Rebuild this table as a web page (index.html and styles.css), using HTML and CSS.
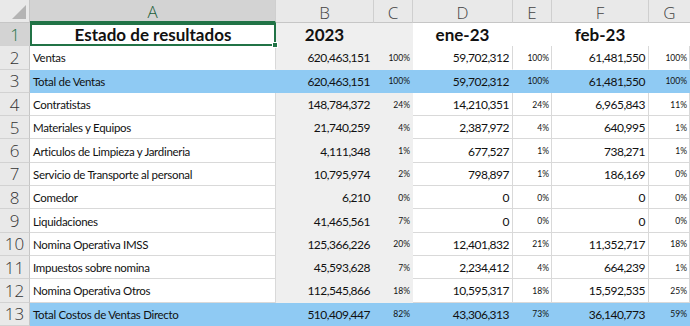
FILE: index.html
```html
<!DOCTYPE html>
<html lang="es">
<head>
<meta charset="utf-8">
<title>Estado de resultados</title>
<link rel="stylesheet" href="styles.css">
</head>
<body>
<div class="sheet">
  <div class="corner"><svg width="30" height="23" viewBox="0 0 30 23"><polygon points="26,5 26,19 12,19" fill="#b4b4b4"/></svg></div>
  <div class="colh sel">A</div>
  <div class="colh">B</div>
  <div class="colh">C</div>
  <div class="colh">D</div>
  <div class="colh">E</div>
  <div class="colh">F</div>
  <div class="colh last">G</div>

  <div class="rowh sel">1</div>
  <div class="c title active">Estado de resultados<span class="handle"></span></div>
  <div class="c g head">2023</div>
  <div class="c g"></div>
  <div class="c w0 head">ene-23</div>
  <div class="c w0"></div>
  <div class="c w0 head">feb-23</div>
  <div class="c w0"></div>

  <div class="rowh">2</div>
  <div class="c lbl nb">Ventas</div>
  <div class="c g num">620,463,151</div>
  <div class="c g pct">100%</div>
  <div class="c num nb">59,702,312</div>
  <div class="c pct nb">100%</div>
  <div class="c num nb">61,481,550</div>
  <div class="c pct nb">100%</div>

  <div class="rowh">3</div>
  <div class="c b lbl">Total de Ventas</div>
  <div class="c b num">620,463,151</div>
  <div class="c b pct">100%</div>
  <div class="c b num">59,702,312</div>
  <div class="c b pct">100%</div>
  <div class="c b num">61,481,550</div>
  <div class="c b pct">100%</div>

  <div class="rowh">4</div>
  <div class="c lbl">Contratistas</div>
  <div class="c g num">148,784,372</div>
  <div class="c g pct">24%</div>
  <div class="c num">14,210,351</div>
  <div class="c pct">24%</div>
  <div class="c num">6,965,843</div>
  <div class="c pct">11%</div>

  <div class="rowh">5</div>
  <div class="c lbl">Materiales y Equipos</div>
  <div class="c g num">21,740,259</div>
  <div class="c g pct">4%</div>
  <div class="c num">2,387,972</div>
  <div class="c pct">4%</div>
  <div class="c num">640,995</div>
  <div class="c pct">1%</div>

  <div class="rowh">6</div>
  <div class="c lbl">Articulos de Limpieza y Jardineria</div>
  <div class="c g num">4,111,348</div>
  <div class="c g pct">1%</div>
  <div class="c num">677,527</div>
  <div class="c pct">1%</div>
  <div class="c num">738,271</div>
  <div class="c pct">1%</div>

  <div class="rowh">7</div>
  <div class="c lbl">Servicio de Transporte al personal</div>
  <div class="c g num">10,795,974</div>
  <div class="c g pct">2%</div>
  <div class="c num">798,897</div>
  <div class="c pct">1%</div>
  <div class="c num">186,169</div>
  <div class="c pct">0%</div>

  <div class="rowh">8</div>
  <div class="c lbl">Comedor</div>
  <div class="c g num">6,210</div>
  <div class="c g pct">0%</div>
  <div class="c num">0</div>
  <div class="c pct">0%</div>
  <div class="c num">0</div>
  <div class="c pct">0%</div>

  <div class="rowh">9</div>
  <div class="c lbl">Liquidaciones</div>
  <div class="c g num">41,465,561</div>
  <div class="c g pct">7%</div>
  <div class="c num">0</div>
  <div class="c pct">0%</div>
  <div class="c num">0</div>
  <div class="c pct">0%</div>

  <div class="rowh">10</div>
  <div class="c lbl">Nomina Operativa IMSS</div>
  <div class="c g num">125,366,226</div>
  <div class="c g pct">20%</div>
  <div class="c num">12,401,832</div>
  <div class="c pct">21%</div>
  <div class="c num">11,352,717</div>
  <div class="c pct">18%</div>

  <div class="rowh">11</div>
  <div class="c lbl">Impuestos sobre nomina</div>
  <div class="c g num">45,593,628</div>
  <div class="c g pct">7%</div>
  <div class="c num">2,234,412</div>
  <div class="c pct">4%</div>
  <div class="c num">664,239</div>
  <div class="c pct">1%</div>

  <div class="rowh">12</div>
  <div class="c lbl">Nomina Operativa Otros</div>
  <div class="c g num">112,545,866</div>
  <div class="c g pct">18%</div>
  <div class="c num">10,595,317</div>
  <div class="c pct">18%</div>
  <div class="c num">15,592,535</div>
  <div class="c pct">25%</div>

  <div class="rowh">13</div>
  <div class="c b lbl">Total Costos de Ventas Directo</div>
  <div class="c b num">510,409,447</div>
  <div class="c b pct">82%</div>
  <div class="c b num">43,306,313</div>
  <div class="c b pct">73%</div>
  <div class="c b num">36,140,773</div>
  <div class="c b pct">59%</div>
</div>
</body>
</html>
```
FILE: styles.css
```css
html, body {
  margin: 0;
  padding: 0;
  background: #ffffff;
  overflow: hidden;
}
.sheet {
  display: grid;
  grid-template-columns: 30px 246px 98px 39px 100px 39px 97px 41px;
  grid-template-rows: 23px repeat(13, 23.3px);
  width: 690px;
  font-family: Lato, "Liberation Sans", sans-serif;
  color: #111;
}
.corner {
  background: #e9e9e9;
  border-right: 1px solid #c6c6c6;
  border-bottom: 1px solid #c6c6c6;
  box-sizing: border-box;
}
.corner svg { display: block; }
.colh {
  background: #e9e9e9;
  border-right: 1px solid #cfcfcf;
  border-bottom: 1px solid #c6c6c6;
  box-sizing: border-box;
  display: flex;
  align-items: center;
  justify-content: center;
  font-family: "Open Sans", "Noto Sans", sans-serif;
  font-weight: 300;
  font-size: 17px;
  color: #444;
  padding-top: 2px;
}
.colh.sel {
  background: #d3d3d3;
  border-bottom: 2px solid #217346;
  color: #1d5e3a;
}
.colh.last { border-right: none; }
.rowh {
  background: #e9e9e9;
  border-right: 1px solid #c6c6c6;
  border-bottom: 1px solid #d2d2d2;
  box-sizing: border-box;
  display: flex;
  align-items: center;
  justify-content: center;
  font-family: "Open Sans", "Noto Sans", sans-serif;
  font-weight: 300;
  font-size: 17px;
  color: #333;
}
.rowh.sel {
  background: #d3d3d3;
  color: #217346;
  border-right: none;
}
.c {
  box-sizing: border-box;
  border-right: 1px solid #d9d9d9;
  border-bottom: 1px solid #d9d9d9;
  background: #ffffff;
  display: flex;
  align-items: center;
  white-space: nowrap;
  overflow: hidden;
  position: relative;
}
.c.nb { border-bottom-color: #ffffff; }
.c.w0 { border-color: #ffffff; }
.c.g {
  background: #efefef;
  border-color: #efefef;
}
.c.b {
  background: #8fcaf3;
  border-color: #8fcaf3;
}
.lbl {
  font-size: 11.5px;
  letter-spacing: -0.3px;
  padding-left: 3px;
  padding-top: 1px;
}
.num {
  justify-content: flex-end;
  font-size: 12px;
  letter-spacing: -0.5px;
  padding-right: 3px;
  padding-top: 1px;
}
.pct {
  justify-content: flex-end;
  font-size: 8.5px;
  padding-right: 2px;
  padding-top: 1px;
}
.head {
  justify-content: center;
  font-weight: 700;
  font-size: 17px;
}
.title {
  justify-content: center;
  font-weight: 700;
  font-size: 17px;
  overflow: visible;
}
.active {
  border: 2px solid #217346;
  z-index: 2;
}
.handle {
  position: absolute;
  right: -4px;
  bottom: -4px;
  width: 6px;
  height: 6px;
  background: #217346;
  border: 1px solid #ffffff;
  box-sizing: border-box;
}
```
